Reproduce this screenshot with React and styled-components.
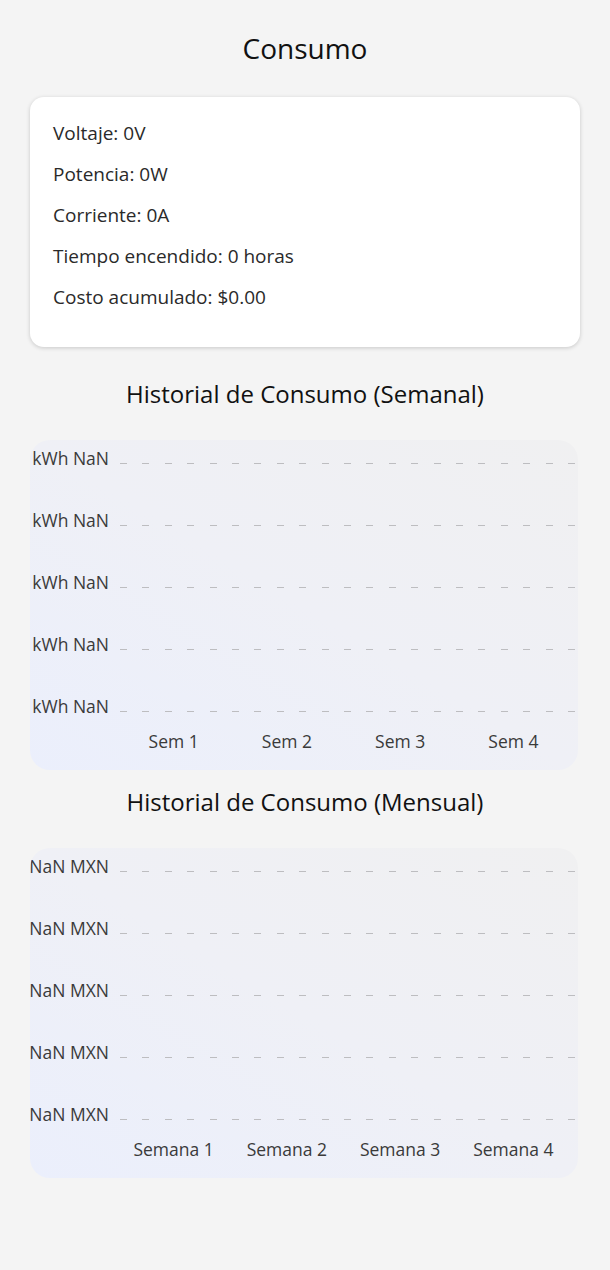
import React from "react"
import styled, { createGlobalStyle } from "styled-components"

const GlobalStyle = createGlobalStyle`
  body {
    margin: 0;
    background: #f4f4f4;
    font-family: "Open Sans", "Noto Sans", sans-serif;
    color: #222;
  }
`

const weekly = {
  title: "Historial de Consumo (Semanal)",
  ticks: ["kWh NaN", "kWh NaN", "kWh NaN", "kWh NaN", "kWh NaN"],
  labels: ["Sem 1", "Sem 2", "Sem 3", "Sem 4"],
}

const monthly = {
  title: "Historial de Consumo (Mensual)",
  ticks: ["NaN MXN", "NaN MXN", "NaN MXN", "NaN MXN", "NaN MXN"],
  labels: ["Semana 1", "Semana 2", "Semana 3", "Semana 4"],
}

const stats = [
  "Voltaje: 0V",
  "Potencia: 0W",
  "Corriente: 0A",
  "Tiempo encendido: 0 horas",
  "Costo acumulado: $0.00",
]

function Chart({ data, $top }) {
  return <>
    <SectionTitle $top={$top}>{data.title}</SectionTitle>
    <ChartCard>
      {data.ticks.map((t, i) => (
        <GridRow key={i}>
          <Tick><span>{t}</span></Tick>
          <DashLine/>
        </GridRow>
      ))}
      <Axis>
        {data.labels.map(l => <AxisLabel key={l}>{l}</AxisLabel>)}
      </Axis>
    </ChartCard>
  </>
}

export default function App() {
  return <Page>
    <GlobalStyle/>
    <Title>Consumo</Title>
    <InfoCard>
      {stats.map(s => <Stat key={s}>{s}</Stat>)}
    </InfoCard>
    <Chart data={weekly} $top={33}/>
    <Chart data={monthly} $top={18}/>
  </Page>
}

const Page = styled.div`
  display: flex;
  flex-direction: column;
  padding: 31px 30px 80px 30px;
  min-height: 1270px;
  box-sizing: border-box;
`
const Title = styled.h1`
  margin: 0;
  text-align: center;
  font-size: 28px;
  line-height: 34px;
  font-weight: 400;
  color: #111;
`
const InfoCard = styled.div`
  margin-top: 32px;
  background: #fff;
  border-radius: 14px;
  box-shadow: 0 1px 4px rgba(0, 0, 0, 0.18);
  padding: 24px 23px 38px 23px;
  display: flex;
  flex-direction: column;
  gap: 17px;
`
const Stat = styled.div`
  font-size: 19px;
  line-height: 24px;
  color: #2a2a2a;
`
const SectionTitle = styled.h2`
  margin: ${p => p.$top}px 0 0 0;
  text-align: center;
  font-size: 24px;
  line-height: 28px;
  font-weight: 400;
  color: #111;
`
const ChartCard = styled.div`
  margin: 32px 2px 0 0;
  border-radius: 20px;
  overflow: hidden;
  background: linear-gradient(to top right, #ebeffc 0%, #eff0f6 50%, #f0f0f1 100%);
  padding: 8px 0 19px 0;
  display: flex;
  flex-direction: column;
  gap: 42px;
`
const GridRow = styled.div`
  display: flex;
  align-items: center;
  height: 20px;
`
const Tick = styled.div`
  width: 79px;
  flex-shrink: 0;
  display: flex;
  justify-content: flex-end;
  white-space: nowrap;
  font-size: 17.5px;
  line-height: 20px;
  color: #3a3a3a;
`
const DashLine = styled.div`
  flex: 1;
  height: 1px;
  margin: 10px 0 0 11px;
  background: repeating-linear-gradient(to right, #bdbdc0 0 7px, transparent 7px 22.4px);
`
const Axis = styled.div`
  margin: -27px 8px 0 87px;
  display: grid;
  grid-template-columns: repeat(4, 1fr);
`
const AxisLabel = styled.div`
  text-align: center;
  font-size: 17.5px;
  line-height: 20px;
  color: #3a3a3a;
`
